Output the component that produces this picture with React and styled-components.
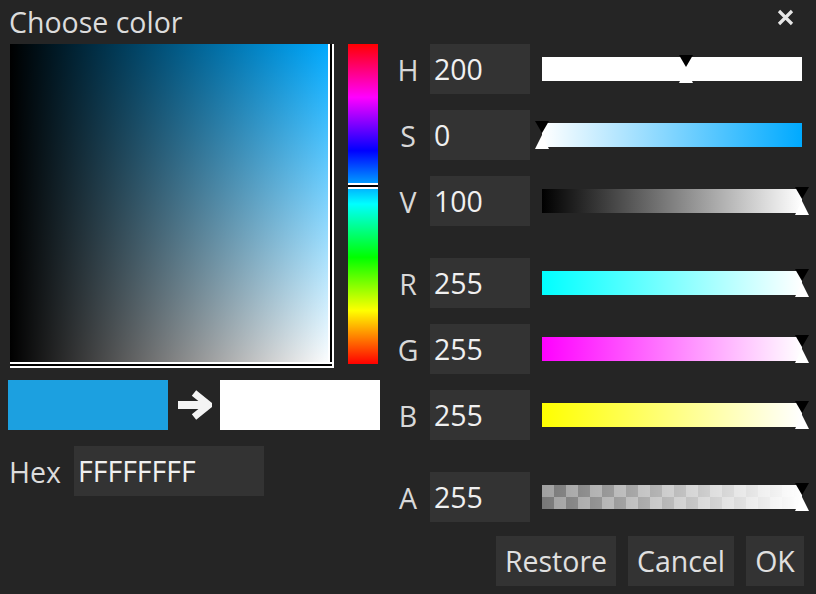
import React from 'react';
import styled, { createGlobalStyle } from 'styled-components';

const GlobalStyle = createGlobalStyle`
    body {
        margin: 0;
        background: #252525;
        font-family: "Open Sans", "Noto Sans", sans-serif;
    }
`;

const Dialog = styled.div`
    width: 816px;
    height: 594px;
    background: #252525;
    display: flex;
    flex-direction: column;
    box-sizing: border-box;
    overflow: hidden;
    color: #e0e0e0;
`;

const TitleBar = styled.div`
    height: 44px;
    display: flex;
    align-items: center;
    justify-content: space-between;
    padding: 0 22px 0 9px;
    flex-shrink: 0;
`;

const Title = styled.div`
    font-size: 28.5px;
    line-height: 44px;
    color: #dcdcdc;
`;

const CloseButton = styled.div`
    width: 17px;
    height: 17px;
    margin-top: -9px;
    display: flex;
`;

const Body = styled.div`
    display: flex;
    padding: 0 12px 0 8px;
    gap: 10px;
`;

const LeftColumn = styled.div`
    width: 372px;
    display: flex;
    flex-direction: column;
`;

const PickerRow = styled.div`
    display: flex;
    height: 320px;
    padding-left: 2px;
    gap: 18px;
`;

const SVSquare = styled.div`
    position: relative;
    width: 320px;
    height: 320px;
    background:
        linear-gradient(to right, #000, rgba(0, 0, 0, 0)),
        linear-gradient(to bottom, ${p => p.$hue}, #fff);
`;

const VLine = styled.div`
    position: absolute;
    top: 0;
    right: -4px;
    width: 6px;
    height: 324px;
    background: linear-gradient(to right, #fff 0 2px, #000 2px 4px, #fff 4px 6px);
`;

const HLine = styled.div`
    position: absolute;
    left: 0;
    bottom: -4px;
    width: 322px;
    height: 6px;
    background: linear-gradient(to bottom, #fff 0 2px, #000 2px 4px, #fff 4px 6px);
`;

const HueBar = styled.div`
    position: relative;
    width: 30px;
    height: 320px;
    background: linear-gradient(to bottom, #f00, #f0f, #00f, #0ff, #0f0, #ff0, #f00);
`;

const HueMarker = styled.div`
    position: absolute;
    left: 0;
    width: 30px;
    height: 6px;
    margin-top: -3px;
    background: linear-gradient(to bottom, #fff 0 2px, #000 2px 4px, #fff 4px 6px);
`;

const PreviewRow = styled.div`
    display: flex;
    align-items: center;
    height: 50px;
    margin-top: 16px;
`;

const Swatch = styled.div`
    width: 160px;
    height: 50px;
    background: ${p => p.$color};
`;

const ArrowBox = styled.div`
    width: 36px;
    height: 30px;
    margin: 0 8px;
    display: flex;
`;

const HexRow = styled.div`
    display: flex;
    align-items: center;
    height: 50px;
    margin-top: 16px;
`;

const HexLabel = styled.div`
    width: 66px;
    padding: 1px 0 0 1px;
    box-sizing: border-box;
    font-size: 28.5px;
    color: #dcdcdc;
`;

const ValueBox = styled.div`
    width: ${p => p.$width}px;
    height: 50px;
    background: #333333;
    padding: 1px 0 0 4px;
    box-sizing: border-box;
    font-size: 28.5px;
    line-height: 49px;
    color: #f0f0f0;
`;

const RightColumn = styled.div`
    flex: 1;
    display: flex;
    flex-direction: column;
`;

const ChannelRow = styled.div`
    display: flex;
    align-items: center;
    height: 50px;
    margin-top: ${p => p.$top}px;
`;

const ChannelLabel = styled.div`
    width: 36px;
    margin-right: 4px;
    padding-top: 1px;
    text-align: center;
    font-size: 28.5px;
    color: #d8d8d8;
`;

const Slider = styled.div`
    position: relative;
    width: 260px;
    height: 24px;
    margin-left: 12px;
    background: ${p => p.$bg};
`;

const Marker = styled.svg`
    position: absolute;
    top: -2px;
    width: 14px;
    height: 28px;
    transform: translateX(-50%);
`;

const ButtonRow = styled.div`
    display: flex;
    justify-content: flex-end;
    gap: 12px;
    margin-top: 14px;
`;

const Button = styled.div`
    width: ${p => p.$width}px;
    height: 50px;
    padding-top: 1px;
    box-sizing: border-box;
    background: #333333;
    text-align: center;
    font-size: 28.5px;
    line-height: 49px;
    color: #e0e0e0;
`;

const checker = 'repeating-conic-gradient(#777 0 25%, #a0a0a0 0 50%) 0 0 / 24px 24px';

const channels = [
    { name: 'H', value: '200', pos: 200 / 360, bg: '#fff', top: 0 },
    { name: 'S', value: '0', pos: 0, bg: 'linear-gradient(to right, #fff, #00aaff)', top: 16 },
    { name: 'V', value: '100', pos: 1, bg: 'linear-gradient(to right, #000, #fff)', top: 16 },
    { name: 'R', value: '255', pos: 1, bg: 'linear-gradient(to right, #0ff, #fff)', top: 32 },
    { name: 'G', value: '255', pos: 1, bg: 'linear-gradient(to right, #f0f, #fff)', top: 16 },
    { name: 'B', value: '255', pos: 1, bg: 'linear-gradient(to right, #ff0, #fff)', top: 16 },
    { name: 'A', value: '255', pos: 1, bg: `linear-gradient(to right, rgba(255,255,255,0), #fff), ${checker}`, top: 32 },
];

function SliderMarker({ pos }) {
    return (
        <Marker viewBox="0 0 14 28" style={{ left: `${pos * 100}%` }}>
            <polygon points="0,0 14,0 7,12" fill="#000" />
            <polygon points="7,14 14,28 0,28" fill="#fff" />
        </Marker>
    );
}

function App() {
    const hue = 200;

    return (
        <Dialog>
            <GlobalStyle />
            <TitleBar>
                <Title>Choose color</Title>
                <CloseButton>
                    <svg width="17" height="17" viewBox="0 0 17 17">
                        <path d="M2 2 L15 15 M15 2 L2 15" stroke="#e6e6e6" strokeWidth="3.2" />
                    </svg>
                </CloseButton>
            </TitleBar>
            <Body>
                <LeftColumn>
                    <PickerRow>
                        <SVSquare $hue="#00aaff">
                            <VLine />
                            <HLine />
                        </SVSquare>
                        <HueBar>
                            <HueMarker style={{ top: `${((360 - hue) / 360) * 320}px` }} />
                        </HueBar>
                    </PickerRow>
                    <PreviewRow>
                        <Swatch $color="#1ca0e0" />
                        <ArrowBox>
                            <svg width="36" height="30" viewBox="0 0 36 30">
                                <rect x="2" y="11" width="26" height="8" fill="#f4f4f4" />
                                <path d="M18 3 L33 15 L18 27" stroke="#f4f4f4" strokeWidth="7" fill="none" strokeLinejoin="miter" />
                            </svg>
                        </ArrowBox>
                        <Swatch $color="#ffffff" />
                    </PreviewRow>
                    <HexRow>
                        <HexLabel>Hex</HexLabel>
                        <ValueBox $width={190}>FFFFFFFF</ValueBox>
                    </HexRow>
                </LeftColumn>
                <RightColumn>
                    {channels.map(ch => (
                        <ChannelRow key={ch.name} $top={ch.top}>
                            <ChannelLabel>{ch.name}</ChannelLabel>
                            <ValueBox $width={100}>{ch.value}</ValueBox>
                            <Slider $bg={ch.bg}>
                                <SliderMarker pos={ch.pos} />
                            </Slider>
                        </ChannelRow>
                    ))}
                    <ButtonRow>
                        <Button $width={120}>Restore</Button>
                        <Button $width={106}>Cancel</Button>
                        <Button $width={58}>OK</Button>
                    </ButtonRow>
                </RightColumn>
            </Body>
        </Dialog>
    );
}

export default App;
